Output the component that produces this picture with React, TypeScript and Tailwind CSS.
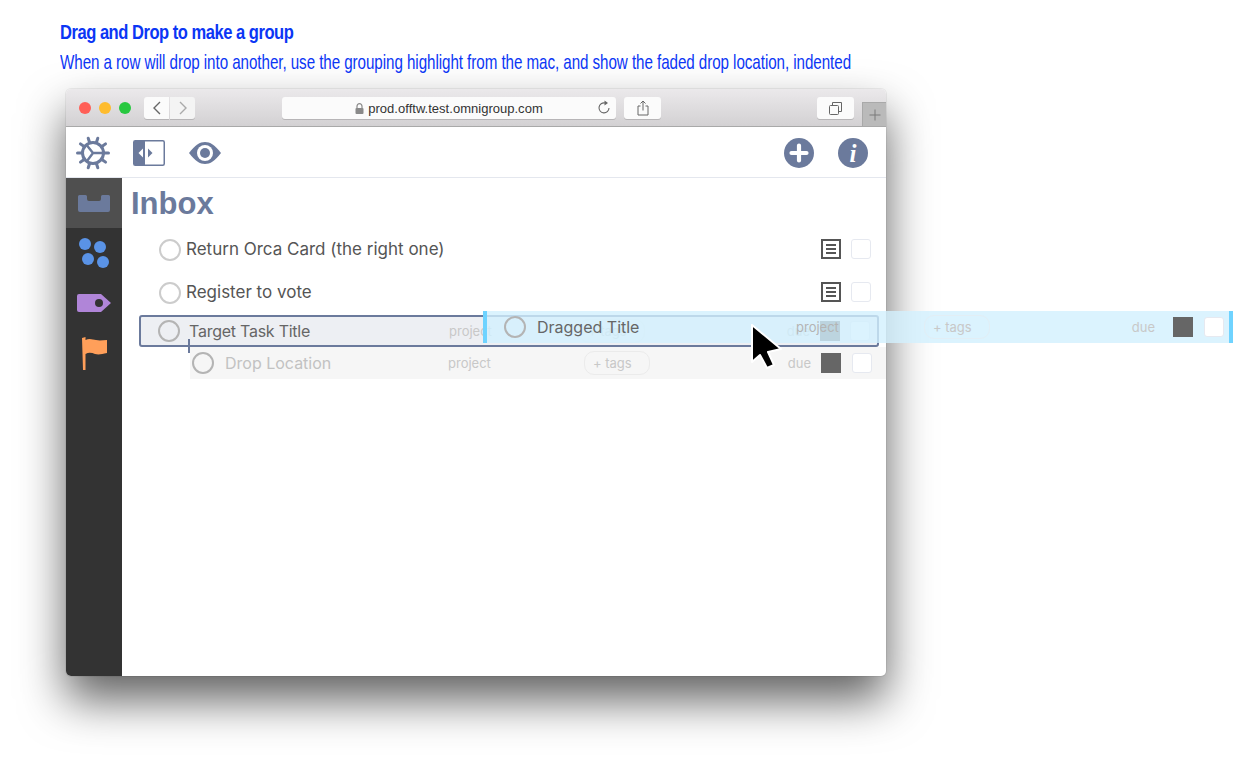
import React from "react";

const slate = "#6b7a9c";

function Gear() {
  const teeth = Array.from({ length: 10 }, (_, i) => i * 36);
  return (
    <svg width="34" height="34" viewBox="0 0 34 34" fill="none" stroke={slate}>
      <circle cx="17" cy="17" r="10.5" strokeWidth="3" />
      {teeth.map((a) => (
        <line key={a} x1="17" y1="6" x2="17" y2="1.5" strokeWidth="3" strokeLinecap="round" transform={`rotate(${a + 18} 17 17)`} />
      ))}
      <path d="M11 9.5 L17 17 L27 17 M17 17 L11 25" strokeWidth="2.4" />
    </svg>
  );
}

function Circle({ color = "#cccccc", mr = "mr-[5px]" }: { color?: string; mr?: string }) {
  return <span className={`w-[22px] h-[22px] rounded-full border-[2.5px] shrink-0 ${mr}`} style={{ borderColor: color }} />;
}

function NoteIcon() {
  return (
    <span className="w-5 h-5 mb-[2px] border-[2px] border-[#555555] flex flex-col justify-center gap-[2px] px-[3px] shrink-0">
      <span className="h-[2px] bg-[#555555]" />
      <span className="h-[2px] bg-[#555555]" />
      <span className="h-[2px] bg-[#555555]" />
    </span>
  );
}

function Check({ extra = "" }: { extra?: string }) {
  return <span className={`w-5 h-5 rounded-[3px] border border-[#e6e9f0] bg-white shrink-0 ${extra}`} />;
}

function PlainRow({ title }: { title: string }) {
  return (
    <div className="h-[43px] flex items-center pl-[37px] pr-[15px]">
      <Circle />
      <span className="text-[17px] text-[#555555] flex-1">{title}</span>
      <NoteIcon />
      <Check extra="ml-[10px] mb-[2px]" />
    </div>
  );
}

export default function App() {
  return (
    <div className="relative w-[1243px] h-[766px] overflow-hidden bg-white pl-[60px] pt-[20px] font-['Inter',sans-serif]">
      <div className="h-[24px] leading-[24px] text-[21px] font-bold text-[#0b36f5] font-['Liberation_Sans',sans-serif] tracking-[-0.6px] scale-x-[0.787] origin-left whitespace-nowrap">
        Drag and Drop to make a group
      </div>
      <div className="mt-[6px] h-[24px] leading-[24px] text-[21px] text-[#0b36f5] font-['Liberation_Sans',sans-serif] whitespace-nowrap tracking-[-0.1px] scale-x-[0.724] origin-left">
        When a row will drop into another, use the grouping highlight from the mac, and show the faded drop location, indented
      </div>

      {/* Browser window */}
      <div className="ml-[6px] mt-[15px] w-[820px] h-[587px] rounded-[5px] overflow-hidden bg-white flex flex-col shadow-[0_0_0_1px_rgba(0,0,0,0.06),0_24px_46px_rgba(0,0,0,0.62)]">
        {/* title bar */}
        <div className="h-[38px] shrink-0 border-b border-[#a9a9a9] bg-gradient-to-b from-[#ebe9eb] to-[#d3d1d3] flex items-end pb-[7px] pl-[13px] relative">
          <span className="w-3 h-3 rounded-full bg-[#ff5f57] mb-[5px]" />
          <span className="w-3 h-3 rounded-full bg-[#febc2e] ml-2 mb-[5px]" />
          <span className="w-3 h-3 rounded-full bg-[#28c840] ml-2 mb-[5px]" />
          <div className="ml-[13px] w-[25px] h-[22px] rounded-l-[3px] bg-[#fbfbfb] shadow-[0_1px_0_rgba(0,0,0,0.15)] flex items-center justify-center">
            <svg width="10" height="14" viewBox="0 0 10 14" fill="none" stroke="#666" strokeWidth="1.4"><path d="M8 1 L2 7 L8 13" /></svg>
          </div>
          <div className="ml-[1px] w-[25px] h-[22px] rounded-r-[3px] bg-[#f4f4f4] shadow-[0_1px_0_rgba(0,0,0,0.15)] flex items-center justify-center">
            <svg width="10" height="14" viewBox="0 0 10 14" fill="none" stroke="#aaa" strokeWidth="1.4"><path d="M2 1 L8 7 L2 13" /></svg>
          </div>
          <div className="ml-[87px] w-[334px] h-[22px] rounded-[3px] bg-[#fbfbfb] shadow-[0_1px_0_rgba(0,0,0,0.15)] flex items-center justify-center relative">
            <svg width="9" height="11" viewBox="0 0 9 11" className="mr-[4px]">
              <path d="M2 5 V3.2 a2.5 2.5 0 0 1 5 0 V5" fill="none" stroke="#8a8a8a" strokeWidth="1.2" />
              <rect x="0.5" y="5" width="8" height="6" rx="1" fill="#8a8a8a" />
            </svg>
            <span className="text-[13px] text-[#333333] font-['Liberation_Sans',sans-serif] pt-[1px] tracking-[0.02px]">prod.offtw.test.omnigroup.com</span>
            <svg width="14" height="15" viewBox="0 0 14 15" fill="none" className="absolute right-[5px] top-[3px]">
              <path d="M8 3 A5 5 0 1 0 12 8" stroke="#666" strokeWidth="1.1" />
              <path d="M7.5 0.5 L11 3 L7.5 5.5 Z" fill="#666" />
            </svg>
          </div>
          <div className="ml-[8px] w-[37px] h-[22px] rounded-[3px] bg-[#fbfbfb] shadow-[0_1px_0_rgba(0,0,0,0.15)] flex items-center justify-center">
            <svg width="12" height="16" viewBox="0 0 12 16" fill="none" stroke="#666" strokeWidth="1">
              <path d="M3.5 6 H1 V15 H11 V6 H8.5 M6 10.5 V1 M3.5 3.5 L6 1 L8.5 3.5" />
            </svg>
          </div>
          <div className="ml-[156px] w-[37px] h-[22px] rounded-[3px] bg-[#fbfbfb] shadow-[0_1px_0_rgba(0,0,0,0.15)] flex items-center justify-center">
            <svg width="13" height="13" viewBox="0 0 13 13" fill="none" stroke="#666" strokeWidth="1">
              <rect x="0.5" y="3.5" width="9" height="9" rx="1" />
              <path d="M3.5 3.5 V0.5 H12.5 V9.5 H9.5" />
            </svg>
          </div>
          <div className="absolute right-0 bottom-0 w-[24px] h-[24px] bg-[#bababa] border-l border-t border-[#a9a9a9] flex items-center justify-center">
            <svg width="12" height="12" viewBox="0 0 12 12" stroke="#7a7a7a" strokeWidth="1"><path d="M6 0.5 V11.5 M0.5 6 H11.5" /></svg>
          </div>
        </div>

        {/* toolbar */}
        <div className="h-[51px] shrink-0 border-b border-[#e4e7ee] flex items-center pl-[10px] pr-[18px] pt-[2px]">
          <Gear />
          <svg width="32" height="26" viewBox="0 0 32 26" className="ml-[23px]">
            <rect x="0.75" y="0.75" width="30.5" height="24.5" rx="1.5" fill="#fff" stroke={slate} strokeWidth="1.5" />
            <path d="M1 1 H12 V25 H1 Z" fill={slate} />
            <path d="M10 8.5 L5.5 13 L10 17.5 Z" fill="#fff" />
            <path d="M15 8.5 L19.5 13 L15 17.5 Z" fill={slate} />
          </svg>
          <svg width="32" height="22" viewBox="0 0 32 22" className="ml-[24px]">
            <path d="M0 11 C6 3 11 0 16 0 C21 0 26 3 32 11 C26 19 21 22 16 22 C11 22 6 19 0 11 Z" fill={slate} />
            <circle cx="16" cy="11" r="8" fill="#fff" />
            <circle cx="16" cy="11" r="5" fill={slate} />
          </svg>
          <div className="flex-1" />
          <svg width="30" height="30" viewBox="0 0 30 30">
            <circle cx="15" cy="15" r="15" fill={slate} />
            <path d="M15 7.5 V22.5 M7.5 15 H22.5" stroke="#fff" strokeWidth="4.2" strokeLinecap="round" />
          </svg>
          <div className="ml-[24px] w-[30px] h-[30px] rounded-full bg-[#6b7a9c] flex items-center justify-center text-white text-[25px] leading-none font-bold italic font-['Liberation_Serif',serif]">
            i
          </div>
        </div>

        <div className="flex-1 flex min-h-0">
          {/* sidebar */}
          <div className="w-[56px] bg-[#333333] flex flex-col items-center shrink-0">
            <div className="w-full h-[50px] bg-[#4f4f4f] flex items-center justify-center">
              <svg width="32" height="17" viewBox="0 0 32 17">
                <path d="M1.5 0 H7.5 Q9 0 9 1.5 V4 Q9 6 11 6 H21 Q23 6 23 4 V1.5 Q23 0 24.5 0 H30.5 Q32 0 32 1.5 V15 Q32 17 30 17 H2 Q0 17 0 15 V1.5 Q0 0 1.5 0 Z" fill={slate} />
              </svg>
            </div>
            <svg width="32" height="32" viewBox="0 0 32 32" fill="#5a93e6" className="mt-[9px]">
              <circle cx="7" cy="7" r="6" />
              <circle cx="22" cy="10" r="6" />
              <circle cx="10" cy="22" r="6" />
              <circle cx="25" cy="25" r="6" />
            </svg>
            <svg width="34" height="18" viewBox="0 0 34 18" className="mt-[25px]">
              <path d="M2 0 H24 L34 9 L24 18 H2 Q0 18 0 16 V2 Q0 0 2 0 Z" fill="#b085d8" />
              <circle cx="22" cy="9" r="4" fill="#333333" />
            </svg>
            <svg width="26" height="33" viewBox="0 0 26 33" className="mt-[25px] ml-[1px]">
              <path d="M0 1 L3.5 0 V3 C8 1 11 3 14 3 C18 4 21 3 25 3 V16 C20 17 17 18 13 17 C10 16 7 15 3.5 17 V33 H1 Z" fill="#ff9f5a" />
            </svg>
          </div>

          {/* main */}
          <div className="flex-1 flex flex-col min-w-0">
            <div className="h-[50px] flex items-center pl-[9px] pt-[3px] text-[31px] font-bold text-[#6b7a9c] font-['Liberation_Sans',sans-serif]">
              Inbox
            </div>
            <PlainRow title="Return Orca Card (the right one)" />
            <PlainRow title="Register to vote" />

            <div className="relative mt-[1px] ml-[17px] mr-[7px] h-[32px] rounded-[3px] border-2 border-[#6b7a9c] bg-[#edeff3] flex items-center pl-[17px] pr-[7px]">
              <Circle color="#b4b4b4" mr="mr-[9px]" />
              <span className="text-[16px] tracking-[-0.25px] text-[#666666] w-[260px] shrink-0">Target Task Title</span>
              <span className="text-[13px] text-[#c8c8c8] w-[130px] shrink-0 pt-[2px]">project</span>
              <span className="w-[66px] h-[24px] rounded-[10px] border border-[#e8e8e8] text-[13px] text-[#c8c8c8] flex items-center pl-2 pt-[2px] shrink-0">+ tags</span>
              <span className="text-[13px] text-[#c8c8c8] ml-auto mr-[10px] pt-[2px]">due</span>
              <span className="w-5 h-5 bg-[#666666] shrink-0" />
              <Check extra="ml-[10px]" />
              <span className="absolute left-[47px] top-[22px] w-[1.5px] h-[14px] bg-[#6b7a9c]" />
            </div>

            <div className="ml-[68px] h-[32px] bg-[#f6f6f6] flex items-center pl-[2px] pr-[14px]">
              <Circle color="#b4b4b4" mr="mr-[11px]" />
              <span className="text-[16px] text-[#c2c2c2] w-[223px] shrink-0">Drop Location</span>
              <span className="text-[13px] text-[#c8c8c8] w-[136px] shrink-0 pt-[2px]">project</span>
              <span className="w-[66px] h-[24px] rounded-[10px] border border-[#ebebeb] text-[13px] text-[#c8c8c8] flex items-center pl-2 pt-[2px] shrink-0">+ tags</span>
              <span className="text-[13px] text-[#c8c8c8] ml-auto mr-[10px] pt-[2px]">due</span>
              <span className="w-5 h-5 bg-[#666666] shrink-0" />
              <Check extra="ml-[11px]" />
            </div>
          </div>
        </div>
      </div>

      {/* Dragged row overlay */}
      <div className="absolute left-[483px] top-[311px] w-[750px] h-[32px] bg-[rgba(210,240,254,0.8)] border-x-4 border-[#6fd3ff] flex items-center pl-[17px] pr-[5px]">
        <Circle color="#b4b4b4" mr="mr-[11px]" />
        <span className="text-[16px] text-[#666666] w-[259px] shrink-0">Dragged Title</span>
        <span className="text-[13px] text-[#b4b4b4] w-[128px] shrink-0 pt-[2px]">project</span>
        <span className="w-[66px] h-[24px] rounded-[10px] border border-[#e2eef5] text-[13px] text-[#c8c8c8] flex items-center pl-2 pt-[2px] shrink-0">+ tags</span>
        <span className="text-[13px] text-[#c8c8c8] ml-auto mr-[18px] pt-[2px]">due</span>
        <span className="w-5 h-5 bg-[#666666] shrink-0" />
        <Check extra="ml-[11px]" />
      </div>

      {/* Cursor */}
      <svg width="38" height="50" viewBox="0 0 38 50" className="absolute left-[748px] top-[322px]">
        <path d="M4 3 L4 40 L12 33 L19 46 L26 43 L20 30 L33 27 Z" fill="#000" stroke="#fff" strokeWidth="2" strokeLinejoin="round" />
      </svg>
    </div>
  );
}
